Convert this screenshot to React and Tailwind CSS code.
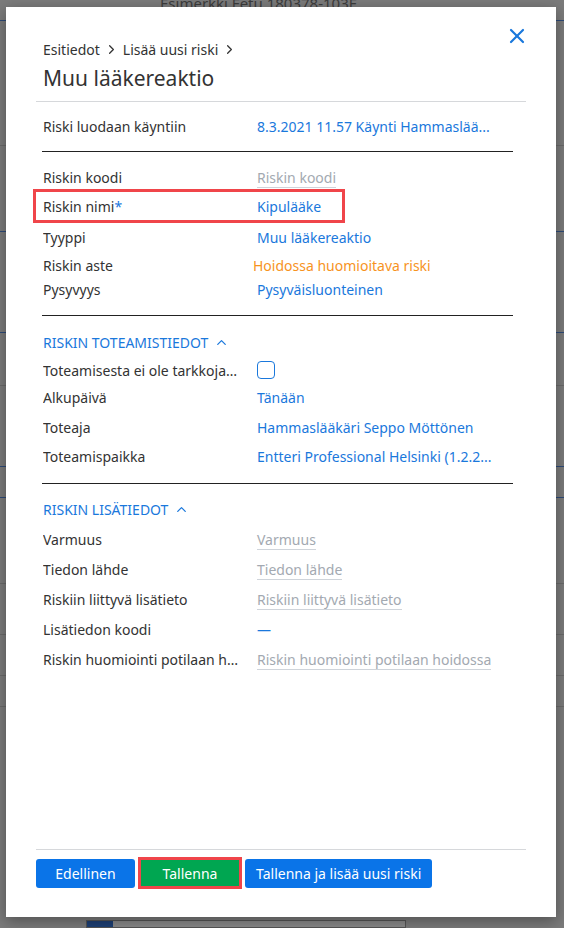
import { X, ChevronRight, ChevronUp } from "lucide-react";

const Row = ({ label, children, className = "" }) => (
  <div className={`flex items-center px-[7px] ${className}`}>
    <div className="w-[214px] shrink-0 truncate pr-[18px] text-[#333]">{label}</div>
    <div className="min-w-0 flex-1 whitespace-nowrap">{children}</div>
  </div>
);

const Link = ({ children }) => <span className="text-[#1a78dc]">{children}</span>;

const Placeholder = ({ children }) => (
  <span className="border-b border-[#cfd4da] text-[#a3a9b1]">{children}</span>
);

const Section = ({ title }) => (
  <div className="flex items-center gap-[6px] px-[7px] text-[#1a78dc]">
    <span>{title}</span>
    <ChevronUp className="h-[15px] w-[15px]" strokeWidth={2} />
  </div>
);

export default function App() {
  return (
    <div
      className="relative h-[928px] w-[564px] overflow-hidden bg-[#7b7b7b] text-[14px]"
      style={{ fontFamily: '"Noto Sans", "Open Sans", sans-serif' }}
    >
      {/* dimmed page behind the dialog */}
      <div className="-mt-[4px] pl-[160px] text-[15px] leading-[14px] text-[#222] opacity-70">Esimerkki Fetu 180378-103F</div>
      <div className="mt-[10px] h-px bg-[#2d4a78]" />
      <div className="mt-[124px] h-px bg-[#6a6a6a]" />
      <div className="mt-[85px] h-px bg-[#2d4a78]" />
      <div className="mt-[100px] h-px bg-[#2d4a78]" />
      <div className="mt-[52px] h-px bg-[#6a6a6a]" />
      <div className="mt-[80px] h-px bg-[#2d4a78]" />
      <div className="mt-[30px] h-px bg-[#2d4a78]" />
      <div className="mt-[85px] h-px bg-[#6a6a6a]" />
      <div className="mt-[50px] h-px bg-[#6a6a6a]" />
      <div className="mt-[40px] h-px bg-[#6a6a6a]" />
      <div className="mt-[30px] h-px bg-[#6a6a6a]" />
      <div className="absolute bottom-0 left-[86px] flex h-[8px] w-[320px] border border-[#555] bg-[#8a8a8a]">
        <div className="w-[26px] bg-[#1d3f74]" />
      </div>

      {/* dialog */}
      <div className="absolute left-[6px] top-[7px] flex h-[910px] w-[550px] flex-col bg-white px-[30px] shadow-[0_4px_14px_rgba(0,0,0,0.35)]">
        <button className="absolute right-[27px] top-[17px] text-[#1a78dc]">
          <X className="h-[24px] w-[24px]" strokeWidth={2.2} />
        </button>

        <div className="mt-[31px] flex h-[22px] items-center px-[7px] text-[#333]">
          <span>Esitiedot</span>
          <ChevronRight className="mx-[4px] h-[15px] w-[15px]" strokeWidth={2} />
          <span>Lisää uusi riski</span>
          <ChevronRight className="ml-[4px] h-[15px] w-[15px]" strokeWidth={2} />
        </div>
        <h1 className="mt-[3px] px-[7px] text-[21px] leading-[30px] text-[#333]">Muu lääkereaktio</h1>
        <div className="mt-[8px] h-px bg-[#d6d8db]" />

        <Row label="Riski luodaan käyntiin" className="mt-[13px] h-[22px]">
          <Link>8.3.2021 11.57 Käynti Hammaslää...</Link>
        </Row>
        <div className="ml-[6px] mr-[13px] mt-[14px] h-px bg-[#222]" />

        <Row label="Riskin koodi" className="mt-[14px] h-[22px]">
          <Placeholder>Riskin koodi</Placeholder>
        </Row>
        <div className="-mx-[3px] mt-[1px] h-[34px] w-[312px] border-[3px] border-[#f0454a]">
          <Row label={<>Riskin nimi<span className="text-[#1a78dc]">*</span></>} className="h-full">
            <Link>Kipulääke</Link>
          </Row>
        </div>
        <Row label="Tyyppi" className="mt-[3px] h-[22px]">
          <Link>Muu lääkereaktio</Link>
        </Row>
        <Row label="Riskin aste" className="mt-[6px] h-[22px]">
          <span className="-ml-[4px] text-[#f7931e]">Hoidossa huomioitava riski</span>
        </Row>
        <Row label="Pysyvyys" className="mt-[2px] h-[22px]">
          <Link>Pysyväisluonteinen</Link>
        </Row>
        <div className="ml-[6px] mr-[13px] mt-[15px] h-px bg-[#222]" />

        <div className="mt-[16px] h-[22px]">
          <Section title="RISKIN TOTEAMISTIEDOT" />
        </div>
        <Row label="Toteamisesta ei ole tarkkoja tietoja" className="mt-[5px] h-[22px]">
          <div className="h-[18px] w-[18px] rounded-[4px] border-[1.5px] border-[#1a78dc]" />
        </Row>
        <Row label="Alkupäivä" className="mt-[5px] h-[22px]">
          <Link>Tänään</Link>
        </Row>
        <Row label="Toteaja" className="mt-[8px] h-[22px]">
          <Link>Hammaslääkäri Seppo Möttönen</Link>
        </Row>
        <Row label="Toteamispaikka" className="mt-[7px] h-[22px]">
          <Link>Entteri Professional Helsinki (1.2.2...</Link>
        </Row>
        <div className="ml-[6px] mr-[13px] mt-[16px] h-px bg-[#222]" />

        <div className="mt-[15px] h-[22px]">
          <Section title="RISKIN LISÄTIEDOT" />
        </div>
        <Row label="Varmuus" className="mt-[7px] h-[22px]">
          <Placeholder>Varmuus</Placeholder>
        </Row>
        <Row label="Tiedon lähde" className="mt-[8px] h-[22px]">
          <Placeholder>Tiedon lähde</Placeholder>
        </Row>
        <Row label="Riskiin liittyvä lisätieto" className="mt-[8px] h-[22px]">
          <Placeholder>Riskiin liittyvä lisätieto</Placeholder>
        </Row>
        <Row label="Lisätiedon koodi" className="mt-[8px] h-[22px]">
          <span className="text-[#1a78dc]">—</span>
        </Row>
        <Row label="Riskin huomiointi potilaan hoidossa" className="mt-[8px] h-[22px]">
          <Placeholder>Riskin huomiointi potilaan hoidossa</Placeholder>
        </Row>

        <div className="mt-auto h-px bg-[#d6d8db]" />
        <div className="mb-[28px] mt-[7px] flex items-center gap-[3px]">
          <button className="h-[29px] w-[99px] rounded-[3px] bg-[#0a74e8] text-[14px] text-white">Edellinen</button>
          <div className="border-[3px] border-[#f0454a] p-0">
            <button className="block h-[26px] w-[98px] bg-[#00a651] text-[14px] text-white">Tallenna</button>
          </div>
          <button className="h-[29px] rounded-[3px] bg-[#0a74e8] px-[11px] text-[14px] text-white">Tallenna ja lisää uusi riski</button>
        </div>
      </div>
    </div>
  );
}
